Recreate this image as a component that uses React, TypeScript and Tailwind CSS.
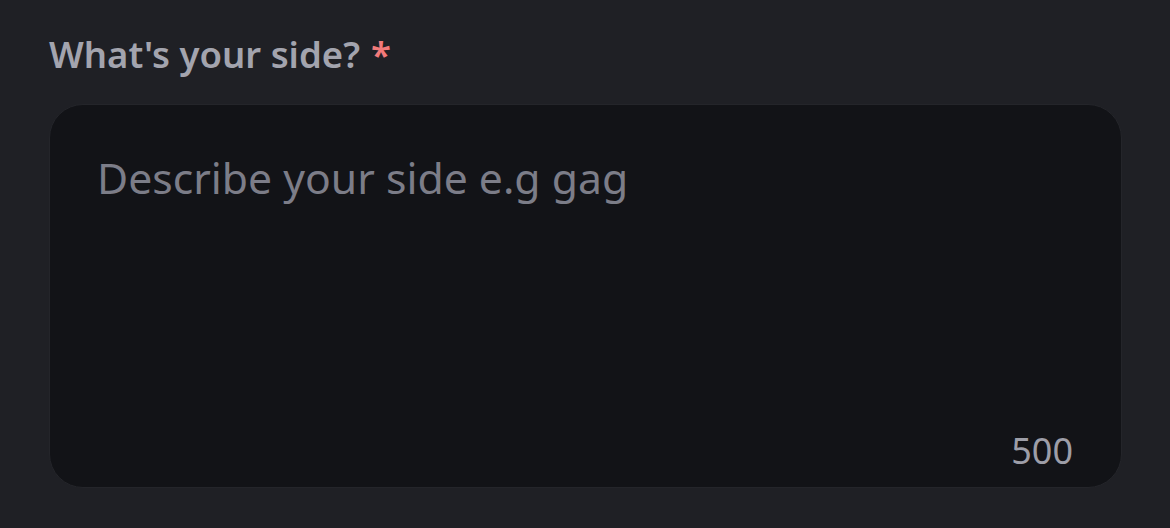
export default function App() {
  return (
    <div
      className="h-[528px] w-[1170px] bg-[#1f2025] px-[49px] pt-[27px]"
      style={{ fontFamily: '"Noto Sans", "Open Sans", sans-serif' }}
    >
      <label className="flex items-center gap-[11px] text-[36.5px] font-semibold leading-[54px] text-[#a3a4ae]">
        <span>What's your side?</span>
        <span className="text-[#f27a7a]">*</span>
      </label>
      <div className="mt-[23px] flex h-[384px] w-[1073px] flex-col rounded-[34px] border border-[#24252a] bg-[#121317] px-[47px] pb-[12px] pt-[42px]">
        <textarea
          placeholder="Describe your side e.g gag"
          className="flex-1 resize-none bg-transparent text-[42.7px] leading-[62px] text-[#c9cad1] outline-none placeholder:text-[#7c7d88]"
        />
        <div className="self-end pr-[1px] text-[36px] leading-[48px] text-[#9d9ea8]">500</div>
      </div>
    </div>
  )
}
